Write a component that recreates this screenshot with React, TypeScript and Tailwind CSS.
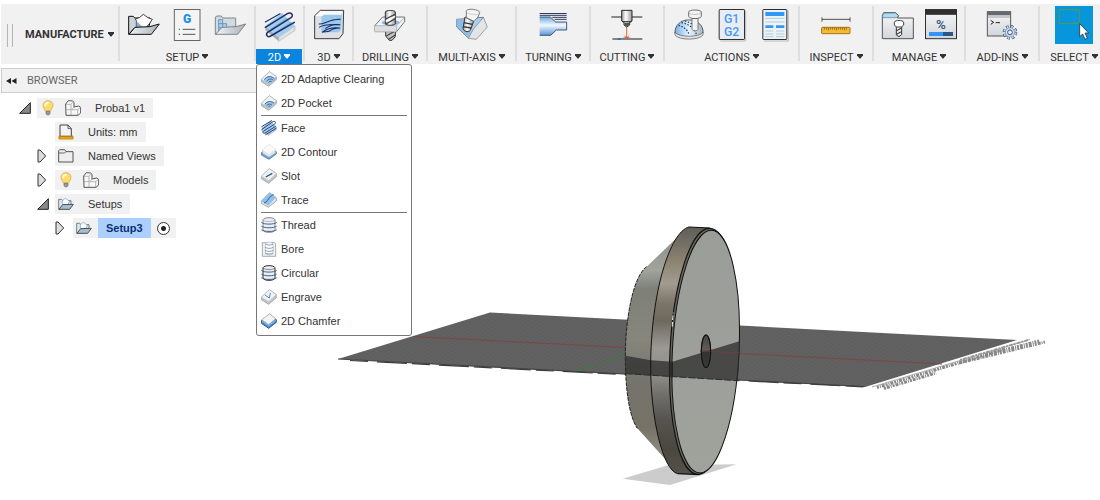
import type { ReactNode } from "react";

/* ---------- shared pieces ---------- */

function Ico({ x, label, children }: { x: number; label: string; children: ReactNode }) {
  return (
    <button type="button" aria-label={label} className="block size-[38px] shrink-0">
      <svg viewBox={`${x} 18 114 114`} className="block size-full" fill="none" aria-hidden="true">
        {children}
      </svg>
    </button>
  );
}

function Mini({ children }: { children: ReactNode }) {
  return (
    <svg viewBox="0 0 48 48" className="block size-4 shrink-0" fill="none" aria-hidden="true">
      {children}
    </svg>
  );
}

function Caret() {
  return (
    <svg viewBox="0 0 6 7" className="block h-[7px] w-1.5 shrink-0" fill="currentColor" aria-hidden="true">
      <path d="M0 0h6v1.200L3.500 4.400h-1L0 1.200z" />
    </svg>
  );
}

function Separator() {
  return <div className="mt-0.5 mb-[3px] w-0.5 shrink-0 bg-[#dedede]" />;
}

type GroupProps = { label: string; width: string; active?: boolean; children: ReactNode; menu?: ReactNode };

function Group({ label, width, active, children, menu }: GroupProps) {
  return (
    <div className={`relative flex shrink-0 flex-col justify-between pt-0.5 ${width}`}>
      <div className="flex justify-center gap-[5px]">{children}</div>
      <button
        type="button"
        className={`flex h-[15px] items-center justify-center gap-[3px] pt-0.5 text-[11px] leading-[13px] ${
          active ? "mr-px bg-[#0a84de] text-white" : "text-[#333]"
        }`}
      >
        {label}
        <Caret />
      </button>
      {menu}
    </div>
  );
}

/* ---------- toolbar drawings ---------- */

const SetupIcon = () => (
  <Ico x={378} label="New setup">
    <path d="M389 49h14l4 5h46v12l-3 14-43 3-18 20z" fill="#cdd2d8" stroke="#111" strokeWidth="3" />
    <path d="M412 82V62l-3-5 12-4 12-10 14 10 13 5-8 12-10 12z" fill="#fff" stroke="#222" strokeWidth="2.500" />
    <path d="M413 64v17h18z" fill="#7fb0de" />
    <path d="M408 82l44-2 29-8-24 31h-67z" fill="url(#lid)" stroke="#111" strokeWidth="3" />
  </Ico>
);

const NcIcon = () => (
  <Ico x={505} label="NC program">
    <rect x="524" y="28.500" width="77" height="93" fill="#f4f4f4" stroke="#666" strokeWidth="3" />
    <text x="562" y="69" textAnchor="middle" fontFamily="Roboto, sans-serif" fontSize="36" fontWeight="900" fill="#1b8fe6">
      G
    </text>
    <path d="M537 88h4M549 88h38M537 103h4M549 103h38" stroke="#555" strokeWidth="3" />
  </Ico>
);

const FolderIcon = () => (
  <Ico x={634} label="New folder">
    <path d="M647 51l5-3h13l4 6h39v24l-61 25z" fill="#d3d9df" stroke="#7c8790" strokeWidth="3" />
    <path
      d="M657 59h12v12h12v12h12v12h-36zM657 71h12M657 83h24M669 71v24M681 83v12"
      fill="#a9cfeb"
      stroke="#5b8db3"
      strokeWidth="2.500"
    />
    <path d="M667 82l42-2 29-8-24 31h-66z" fill="url(#lid)" stroke="#7c8790" strokeWidth="3" />
  </Ico>
);

const TwoDIcon = () => (
  <Ico x={33} label="2D">
    <path d="M46 78l40 33v13L46 91z" fill="#a9adb1" />
    <path d="M86 111l49-33v13l-49 33z" fill="#dfe2e4" stroke="#9ba1a7" strokeWidth="1.500" />
    <path d="M46 78l50-39 39 39-49 34z" fill="#a3cdf0" />
    <path d="M60 90l52-35M74 101l50-34" stroke="#82b0da" strokeWidth="5" />
    <path
      d="M46 82l66-41c12-6 20 5 11 12L54 96c-9 7-2 18 8 12l71-41"
      stroke="#1d2f66"
      strokeWidth="4.500"
      strokeLinecap="round"
    />
    <path d="M46 66l44-25" stroke="#1d2f66" strokeWidth="3.500" strokeLinecap="round" />
  </Ico>
);

const ThreeDIcon = () => (
  <Ico x={180} label="3D">
    <path d="M194 47l17-16h70l-2 70-12 15h-73z" fill="#dfe2e5" stroke="#3a3d40" strokeWidth="3" />
    <path d="M196 48l15-15h67l-6 14z" fill="#f8f9fa" />
    <path d="M214 50l8-6h54l-3 46-8 7h-51z" fill="#9cc7ec" />
    <path
      d="M206 72c18 2 32-17 66-14-20 1-30 3-43 9M207 82c12-8 28-10 64-8-20-3-35 4-45 12M216 97c15-12 28-15 54-13-17 0-24 3-31 9-8 3-17 1-23 4z"
      stroke="#192c62"
      strokeWidth="3.200"
    />
  </Ico>
);

const DrillIcon = () => (
  <Ico x={365} label="Drilling">
    <path d="M409 90h29v20l-10 11h-8l-11-13z" fill="#c4c4c4" stroke="#333" strokeWidth="3" />
    <path d="M411 108l26-15M418 118l20-13" stroke="#444" strokeWidth="3.500" />
    <path d="M377 76l23-25h66v14l-24 30h-65z" fill="#f1f2f4" stroke="#555a60" strokeWidth="2.500" />
    <path d="M377 78h65v17h-65z" fill="#dcdfe2" />
    <path d="M377 77h65l24-25M442 77v18" stroke="#9ba0a6" strokeWidth="2" />
    <ellipse cx="424" cy="68" rx="27" ry="8" fill="#8bbbe8" />
    <path d="M408 36c0-6 30-6 30 0v36c-5 5-26 5-30 0z" fill="url(#metal)" stroke="#333" strokeWidth="3" />
    <path d="M409 57l28-14M410 72l28-16" stroke="#444" strokeWidth="4" />
    <path d="M409 64l28-15" stroke="#fff" strokeWidth="4" />
  </Ico>
);

const MultiIcon = () => (
  <Ico x={610} label="Multi-axis">
    <path d="M621 58l80-6-31 52-14 10-35-33z" fill="#a9d1f2" stroke="#5a7088" strokeWidth="2.500" />
    <path d="M701 52l12 29-33 37-24-3 14-26z" fill="#e2e5e8" stroke="#777" strokeWidth="2" />
    <path d="M621 58h19l22 41-5 14-36-34z" fill="#8dbbe4" />
    <path d="M646 51l26 13-10 27c-8 8-21 2-22-6z" fill="url(#metal)" stroke="#333" strokeWidth="3" />
    <path d="M643 68l25 5M640 80l24 4" stroke="#333" strokeWidth="4" />
    <path d="M650 32c4-8 42-4 40 7l-5 12-12 13-23-11z" fill="#f4f4f4" stroke="#666" strokeWidth="2.500" />
    <path d="M650 37c9 7 29 9 39 4" stroke="#bbb" strokeWidth="2" />
  </Ico>
);

const TurningIcon = () => (
  <Ico x={103} label="Turning">
    <path d="M120 51h32l16 15h33v24h-31l-17 16h-33z" fill="url(#blueV)" />
    <path d="M120 51h32l16 15h33v24h-31l-17 16h-33" stroke="#26425f" strokeWidth="2.500" />
    <path d="M120 40.500h81M120 46h81M158 52h43M165 58h36" stroke="#0e2149" strokeWidth="2.600" />
  </Ico>
);

const CuttingIcon = () => (
  <Ico x={326} label="Cutting">
    <path d="M336 51h93" stroke="#222" strokeWidth="3" />
    <path d="M367 31h31v32l-7 4v8l-9 6-8-6v-8l-7-4z" fill="url(#metal)" stroke="#2b2b2b" strokeWidth="3" />
    <path d="M369 65h28" stroke="#2b2b2b" strokeWidth="3" />
    <path d="M375 68h15v7l-8 5-7-5z" fill="#555" />
    <path d="M382 81v31M375 107l7 7 7-7M382 112l-12 3M382 112l12 3" stroke="#e14b18" strokeWidth="2.500" />
    <path d="M339 117h90" stroke="#858585" strokeWidth="6" />
    <path d="M356 117h8" stroke="#1a78c8" strokeWidth="6" />
  </Ico>
);

const SimulateIcon = () => (
  <Ico x={509} label="Simulate">
    <path d="M524 100c-2-22 17-42 42-40 26-1 44 18 42 38-8 22-76 22-84 2z" fill="url(#blueH)" stroke="#444" strokeWidth="2.500" />
    <path d="M524 96c9 17 76 17 84 0v9c-11 16-72 17-84 0z" fill="#e0e2e4" stroke="#555" strokeWidth="2" />
    <path
      d="M535 76c13 4 26 11 31 27M544 68c20 4 35 14 44 34M554 63c14 4 27 10 36 23"
      stroke="#142c5c"
      strokeWidth="3.500"
      strokeDasharray="4 5"
    />
    <path d="M575 55v33c2 6 16 6 18 0V55z" fill="#f3f3f3" stroke="#666" strokeWidth="2.500" />
    <path d="M565 36c0-8 37-8 38 0v13c-2 9-36 9-38 0z" fill="#f3f3f3" stroke="#555" strokeWidth="2.500" />
    <path d="M565 38c6 7 32 7 38 0" stroke="#aaa" strokeWidth="2" />
  </Ico>
);

const PostIcon = () => (
  <Ico x={640} label="Post process">
    <path d="M662 123h76V32" stroke="#bbb" strokeWidth="3" />
    <rect x="658.500" y="28.500" width="76" height="90" rx="2" fill="#e9edf1" stroke="#2c2f33" strokeWidth="3" />
    <text x="696" y="69" textAnchor="middle" fontFamily="Roboto, sans-serif" fontSize="37" fontWeight="500" fill="#459bf5">
      G1
    </text>
    <text x="696" y="108" textAnchor="middle" fontFamily="Roboto, sans-serif" fontSize="37" fontWeight="500" fill="#459bf5">
      G2
    </text>
  </Ico>
);

const SheetIcon = () => (
  <Ico x={770} label="Setup sheet">
    <path d="M794 123h73V32" stroke="#bbb" strokeWidth="3" />
    <rect x="790.500" y="28.500" width="72" height="90" rx="2" fill="#eef2f5" stroke="#2c2f33" strokeWidth="3" />
    <path d="M798 42h57" stroke="#3398f5" strokeWidth="12" />
    <path d="M798 80h24M830 80h25" stroke="#3398f5" strokeWidth="8" />
    <path
      d="M798 55h57M798 66h57M798 93h24M830 93h25M798 102h24M830 102h25M798 110h24M830 110h25"
      stroke="#abd0e0"
      strokeWidth="3"
    />
  </Ico>
);

const InspectIcon = () => (
  <Ico x={80} label="Measure">
    <path d="M95 58h84M95 52v13M179 52v13" stroke="#333" strokeWidth="2.500" />
    <rect x="94" y="82" width="85" height="19" rx="2" fill="#f3bb35" stroke="#a87412" strokeWidth="3" />
    <path
      d="M102 83v6M108 83v6M114 83v8M120 83v6M126 83v6M132 83v6M138 83v8M144 83v6M150 83v6M156 83v6M162 83v8M168 83v6"
      stroke="#704c08"
      strokeWidth="2"
    />
  </Ico>
);

const ToolLibIcon = () => (
  <Ico x={267} label="Tool library">
    <path d="M277 46l4-8h36l9 9-4 7h48v62h-93z" fill="url(#sheen)" stroke="#555" strokeWidth="3" />
    <path d="M278 46l4-7h35l8 8-5 6h-42z" fill="#b4d9ee" stroke="#3c7fa8" strokeWidth="2" />
    <path d="M319 78h16v26l-8 6-8-5z" fill="#eee" stroke="#333" strokeWidth="3" />
    <path d="M320 92l14-8M320 103l14-8" stroke="#444" strokeWidth="3.500" />
    <path d="M313 66c3-6 25-6 28 0v9l-7 6h-15l-6-6z" fill="#fff" stroke="#444" strokeWidth="3" />
  </Ico>
);

const TaskIcon = () => (
  <Ico x={396} label="Task manager">
    <rect x="406.500" y="29" width="93" height="87" fill="url(#sheen)" stroke="#303030" strokeWidth="3" />
    <path d="M405 36h96" stroke="#303030" strokeWidth="17" />
    <text x="453" y="86" textAnchor="middle" fontFamily="Roboto, sans-serif" fontSize="40" fontWeight="500" fill="#2d527c">
      %
    </text>
    <path d="M417 102h42" stroke="#3494f5" strokeWidth="12" />
    <path d="M459 102h30" stroke="#2a5788" strokeWidth="12" />
  </Ico>
);

const AddInIcon = () => (
  <Ico x={579} label="Scripts and add-ins">
    <rect x="592" y="35" width="70" height="73" fill="url(#sheen)" stroke="#555" strokeWidth="3" />
    <path d="M592 41h70" stroke="#646a70" strokeWidth="10" />
    <path d="M594 51h67" stroke="#777" strokeWidth="2" />
    <path d="M602 61l9 6-9 6M617 68h13" stroke="#222" strokeWidth="3" />
    <circle cx="660" cy="97" r="18" stroke="#3d5878" strokeWidth="8" strokeDasharray="8 6.140" />
    <circle cx="660" cy="97" r="17" stroke="#c9dbef" strokeWidth="6" strokeDasharray="5 8.350" strokeDashoffset="-1.500" />
    <circle cx="660" cy="97" r="14" fill="#c9dbef" stroke="#5b7a9e" strokeWidth="1.500" />
    <circle cx="660" cy="97" r="7" fill="#f2f2f2" stroke="#3d5878" strokeWidth="3" />
  </Ico>
);

const SelectIcon = () => (
  <Ico x={795} label="Select">
    <path d="M795 18h114v114H795z" fill="#0796db" />
    <path d="M808 29h61v42h-61z" stroke="#5d9b3e" strokeWidth="3" />
    <path d="M869 71v39l9-8 7 16 7-3-7-16h11z" fill="#fff" stroke="#333" strokeWidth="2.500" />
  </Ico>
);

const SharedGradients = () => (
  <svg className="absolute size-0" aria-hidden="true">
    <defs>
      <linearGradient id="lid">
        <stop offset="0" stopColor="#f1f3f5" />
        <stop offset="1" stopColor="#a9b1b9" />
      </linearGradient>
      <linearGradient id="sheen" x1="0" y1="0" x2="0" y2="1">
        <stop offset="0" stopColor="#f6f7f8" />
        <stop offset="1" stopColor="#d2d6db" />
      </linearGradient>
      <linearGradient id="metal">
        <stop offset="0" stopColor="#999" />
        <stop offset=".4" stopColor="#fff" />
        <stop offset="1" stopColor="#999" />
      </linearGradient>
      <linearGradient id="blueV" x1="0" y1="0" x2="0" y2="1">
        <stop offset="0" stopColor="#6ea8de" />
        <stop offset=".45" stopColor="#f1f8ff" />
        <stop offset="1" stopColor="#5795d4" />
      </linearGradient>
      <linearGradient id="blueH">
        <stop offset="0" stopColor="#78b2e8" />
        <stop offset=".5" stopColor="#e6f3ff" />
        <stop offset="1" stopColor="#a3b6c8" />
      </linearGradient>
    </defs>
  </svg>
);

/* ---------- 2D menu ---------- */

const Slab = () => (
  <>
    <path d="M1 25L25 2l21 15v9L23 46 1 32z" fill="#c3c6c9" stroke="#8d9195" strokeWidth="2" />
    <path d="M1 25L25 2l21 15-23 21z" fill="#f1f2f3" stroke="#a9adb1" strokeWidth="1.500" />
  </>
);

const Coils = ({ edge }: { edge: string }) => (
  <>
    <path d="M6 8c4-8 32-8 36 0v32c-4 8-32 8-36 0z" fill="#eceef0" stroke={edge} strokeWidth="3" />
    <path d="M6 9c5 6 31 6 36 0" stroke={edge} strokeWidth="1.500" />
    <path
      d="M2 17c8 6 36 6 44 0M2 28c8 6 36 6 44 0M2 39c8 6 36 6 44 0"
      stroke="#3d6492"
      strokeWidth="3"
      strokeLinecap="round"
    />
  </>
);

const menuSections: { name: string; icon: ReactNode }[][] = [
  [
    {
      name: "2D Adaptive Clearing",
      icon: (
        <>
          <Slab />
          <path d="M8 28c6-14 24-16 34-4L24 38z" fill="#9ac5ea" />
          <path d="M10 26c8-12 22-12 31-2M17 31c5-8 14-9 20-3M23 35c2-5 6-5 9-3" stroke="#2c5c93" strokeWidth="2.600" />
        </>
      ),
    },
    {
      name: "2D Pocket",
      icon: (
        <>
          <Slab />
          <path d="M9 29c6-12 24-14 32-4L24 38z" fill="#9ac5ea" />
          <path d="M12 27c6-9 20-10 27-2M17 32c4-6 12-6 16-1M22 36c2-3 4-3 6-1" stroke="#2c5c93" strokeWidth="2.600" />
        </>
      ),
    },
  ],
  [
    {
      name: "Face",
      icon: (
        <>
          <path d="M3 25L28 4l18 17v8L22 46 3 33z" fill="#a5ccef" stroke="#8c9bab" strokeWidth="1.500" />
          <path
            d="M2 20L32 2M3 28L36 5c8-3 10 4 4 8L8 33c-5 4-1 9 4 6l32-20M14 44l31-19"
            stroke="#2a4676"
            strokeWidth="3"
            strokeLinecap="round"
          />
        </>
      ),
    },
    {
      name: "2D Contour",
      icon: (
        <>
          <path d="M1 26l23-12 22 9v7L24 46 1 33z" fill="#6fa6dc" stroke="#2f5f95" strokeWidth="2" />
          <path d="M5 17L25 2l18 13v12L24 39 5 28z" fill="#e4e6e8" stroke="#b6b9bc" strokeWidth="1.500" />
          <path d="M5 17L25 2l18 13-19 15z" fill="#fafafa" />
        </>
      ),
    },
    {
      name: "Slot",
      icon: (
        <>
          <Slab />
          <path d="M14 27l20-11" stroke="#285b9a" strokeWidth="4" />
        </>
      ),
    },
    {
      name: "Trace",
      icon: (
        <>
          <path d="M1 27L26 2l20 15v10L22 46 1 34z" fill="#e0e3e6" stroke="#85898d" strokeWidth="2" />
          <path d="M1 27L26 2l18 14-22 25z" fill="#8fbfea" />
          <path d="M9 33c10-2 12-12 17-17s9-6 12-10" stroke="#285b9a" strokeWidth="3" />
        </>
      ),
    },
  ],
  [
    { name: "Thread", icon: <Coils edge="#888" /> },
    {
      name: "Bore",
      icon: (
        <>
          <path d="M4 5h37l3 3v38H4z" fill="#eff0f2" stroke="#9a9ea3" strokeWidth="2.500" />
          <path d="M13 9c3-7 20-7 23 0v28c-4 6-19 6-23 0z" fill="#fff" stroke="#9aa6b6" strokeWidth="1.500" />
          <path
            d="M13 9c5 4 18 4 23 0M12 19c5 4 20 4 25 0M12 28c5 4 20 4 25 0M13 36c5 4 18 4 23 0"
            stroke="#5f7ca6"
            strokeWidth="2.200"
          />
        </>
      ),
    },
    { name: "Circular", icon: <Coils edge="#2a2a2a" /> },
    {
      name: "Engrave",
      icon: (
        <>
          <Slab />
          <path d="M12 18l13 9 3-15" stroke="#4b8bcf" strokeWidth="3" />
        </>
      ),
    },
    {
      name: "2D Chamfer",
      icon: (
        <>
          <path d="M1 23L26 4l20 16v8L23 46 1 31z" fill="#4a8dd2" stroke="#254366" strokeWidth="2.500" />
          <path d="M2 20L26 2l18 15-21 18z" fill="#f3f4f6" stroke="#8d9196" strokeWidth="1.500" />
          <path d="M3 24l20 14 21-16" stroke="#8fc0ee" strokeWidth="3" />
        </>
      ),
    },
  ],
];

function TwoDMenu() {
  return (
    <div
      role="menu"
      className="absolute top-full left-0 z-10 flex w-[156px] flex-col rounded-[3px] border border-[#777] bg-white px-1 py-0.5 font-['Liberation_Sans',sans-serif]"
    >
      {menuSections.map((items, i) => (
        <div key={i} className={i > 0 ? "border-t border-[#777]" : ""}>
          {items.map((it) => (
            <button
              key={it.name}
              type="button"
              role="menuitem"
              className="flex h-6 w-full items-center gap-1 text-left text-[11px] whitespace-nowrap text-[#333]"
            >
              <Mini>{it.icon}</Mini>
              {it.name}
            </button>
          ))}
        </div>
      ))}
    </div>
  );
}

/* ---------- browser tree ---------- */

const Bulb = () => (
  <Mini>
    <path d="M24 2c10 0 15 7 15 14 0 7-5 10-7 17H16C14 26 9 23 9 16 9 9 14 2 24 2z" fill="#fddc6b" stroke="#c9a136" strokeWidth="2" />
    <path d="M16 16c0-5 4-8 8-8" stroke="#fffbe0" strokeWidth="6" strokeLinecap="round" />
    <path d="M18 34h12v7l-4 4h-4l-4-4z" fill="#999" stroke="#666" strokeWidth="2" />
  </Mini>
);

const Cubes = () => (
  <Mini>
    <path
      d="M2 12L10 2l13 1 4 4v14l14-3 6 4v17l-8 7H3z"
      fill="#f7f7f8"
      stroke="#555"
      strokeWidth="3"
      strokeLinejoin="round"
    />
    <path d="M3 13h14l8-7M18 13v32M3 29h15M20 29l7-8M20 29h18l8-7M38 29v16" stroke="#999" strokeWidth="2" />
  </Mini>
);

const UnitsIcon = () => (
  <Mini>
    <path d="M6 3h24l10 11v26H6z" fill="#f1f3f5" stroke="#444" strokeWidth="3" />
    <path d="M30 3v11h10" stroke="#444" strokeWidth="2.500" />
    <path d="M3 36h42v9H3z" fill="#f3b01f" stroke="#b57b06" strokeWidth="2.500" />
    <path d="M9 36v4M15 36v4M21 36v4M27 36v4M33 36v4M39 36v4" stroke="#704c08" strokeWidth="2" />
  </Mini>
);

const ViewsIcon = () => (
  <Mini>
    <path d="M2 8l3-3h15l4 6h21v31H2z" fill="#eceff2" stroke="#555" strokeWidth="3" />
    <path d="M3 15h17l4-4" stroke="#555" strokeWidth="2.500" />
  </Mini>
);

const SetupsIcon = () => (
  <Mini>
    <path d="M2 10h9l4 4h24v12L2 40z" fill="#e1e6eb" stroke="#777f87" strokeWidth="3" />
    <path d="M13 25V14l9-7 12 8-4 12z" fill="#fff" stroke="#6b9cc9" strokeWidth="2" />
    <path d="M14 26l32-1-11 15H3z" fill="#a7bccd" stroke="#3f5261" strokeWidth="3" />
  </Mini>
);

const Expanded = () => (
  <svg viewBox="0 0 36 36" className="block size-3" aria-hidden="true">
    <path d="M34 2v32H2z" fill="#888" stroke="#222" strokeWidth="3" />
  </svg>
);

const Collapsed = () => (
  <svg viewBox="0 0 30 42" className="block h-3.5 w-2.5" aria-hidden="true">
    <path d="M3 3h6l17 18L9 39H3z" fill="#ddd" stroke="#333" strokeWidth="3" />
  </svg>
);

type RowProps = {
  name: string;
  pad: string;
  state?: "open" | "closed";
  icons: ReactNode[];
  selected?: boolean;
};

function Row({ name, pad, state, icons, selected }: RowProps) {
  return (
    <li className={`flex h-5 items-center ${pad}`}>
      <span className="flex w-[18px] shrink-0 items-center">
        {state && (
          <button type="button" aria-label={`Toggle ${name}`}>
            {state === "open" ? <Expanded /> : <Collapsed />}
          </button>
        )}
      </span>
      <span className="flex h-full items-center bg-[#f1f1f1]">
        {icons.map((icon, i) => (
          <span key={i} className="flex w-[25px] items-center pl-[3px]">
            {icon}
          </span>
        ))}
        <label
          htmlFor={selected ? "active-setup" : undefined}
          className={`flex h-full items-center px-2 pt-px whitespace-nowrap ${selected ? "bg-[#abd0ff] font-bold text-[#0d2f73]" : ""}`}
        >
          {name}
        </label>
        {selected && (
          <input
            id="active-setup"
            type="radio"
            defaultChecked
            className="mx-1.5 size-[13px] appearance-none rounded-full border border-[#333] bg-[radial-gradient(circle,#222_2px,#fff_3px)]"
          />
        )}
      </span>
    </li>
  );
}

function Browser() {
  return (
    <aside className="z-[1] flex w-80 flex-col gap-[5px] justify-self-start pt-1 pl-px font-['Liberation_Sans',sans-serif] text-[11px] text-[#333] [grid-area:1/1]">
      <header className="flex h-[25px] items-center gap-2.5 border border-[#ccc] bg-[#f1f1f1] pl-1 font-['Roboto',sans-serif] text-[#666]">
        <button type="button" aria-label="Collapse browser">
          <svg viewBox="0 0 11 6" className="block h-1.5 w-[11px]" fill="#222" aria-hidden="true">
            <path d="M5 0v6L0 3zM10.500 0v6l-5-3z" />
          </svg>
        </button>
        <span className="pt-px">BROWSER</span>
      </header>
      <ul className="flex flex-col gap-1">
        <Row name="Proba1 v1" pad="pl-[18px]" state="open" icons={[<Bulb />, <Cubes />]} />
        <Row name="Units: mm" pad="pl-9" icons={[<UnitsIcon />]} />
        <Row name="Named Views" pad="pl-9" state="closed" icons={[<ViewsIcon />]} />
        <Row name="Models" pad="pl-9" state="closed" icons={[<Bulb />, <Cubes />]} />
        <Row name="Setups" pad="pl-9" state="open" icons={[<SetupsIcon />]} />
        <Row name="Setup3" pad="pl-[54px]" state="closed" icons={[<SetupsIcon />]} selected />
      </ul>
    </aside>
  );
}

/* ---------- 3D scene ---------- */

const tilt = (cx: number, cy: number) => `matrix(1 0 -.0466 1 ${cx} ${cy})`;

function Scene() {
  return (
    <svg viewBox="0 64 1100 436" className="block h-auto w-full [grid-area:1/1]" fill="none" role="img" aria-label="Model view">
      <defs>
        <pattern id="mesh" width="6" height="4" patternUnits="userSpaceOnUse" patternTransform="rotate(3)">
          <rect width="6" height="4" fill="#5f5f5f" />
          <path d="M0 1h3M3 3h3" stroke="#656565" strokeWidth="1" />
        </pattern>
        <linearGradient id="rim" gradientUnits="userSpaceOnUse" x1="0" y1="50" x2="0" y2="792">
          <stop offset="0" stopColor="#5f5d57" />
          <stop offset=".06" stopColor="#716d63" />
          <stop offset=".14" stopColor="#8c8471" />
          <stop offset=".23" stopColor="#a29c90" />
          <stop offset=".31" stopColor="#7b7568" />
          <stop offset=".38" stopColor="#6e695d" />
          <stop offset=".49" stopColor="#9b9994" />
          <stop offset=".6" stopColor="#8f8d86" />
          <stop offset=".68" stopColor="#706f6a" />
          <stop offset=".78" stopColor="#555450" />
          <stop offset=".9" stopColor="#4c473f" />
          <stop offset="1" stopColor="#55514a" />
        </linearGradient>
        <linearGradient id="cone" gradientUnits="userSpaceOnUse" x1="120" y1="90" x2="150" y2="750">
          <stop offset="0" stopColor="#8e9189" />
          <stop offset=".14" stopColor="#a1a49d" />
          <stop offset=".22" stopColor="#7e8079" />
          <stop offset=".45" stopColor="#86867c" />
          <stop offset=".65" stopColor="#74736c" />
          <stop offset=".85" stopColor="#777267" />
          <stop offset="1" stopColor="#918f87" />
        </linearGradient>
        <linearGradient id="bore" x1="0" y1="0" x2="0" y2="1">
          <stop offset="0" stopColor="#4f4c46" />
          <stop offset=".45" stopColor="#77736a" />
          <stop offset=".55" stopColor="#353535" />
          <stop offset="1" stopColor="#555" />
        </linearGradient>
        <linearGradient id="face" x1="0" y1="0" x2="0" y2="1">
          <stop offset="0" stopColor="#9a9e98" />
          <stop offset="1" stopColor="#a0a29c" />
        </linearGradient>
      </defs>

      <path d="M338 359l152-46.500L1017 340l-152 47z" fill="url(#mesh)" />
      <path d="M338 359L865 386.500" stroke="#474747" strokeWidth="1.200" />
      <path d="M350 360.500L865 387" stroke="#3c3c3c" strokeWidth="1.200" strokeDasharray="18 9 30 5" />
      <path d="M413 336.500L942 364" stroke="#7c4747" strokeWidth="1" />
      <path d="M575 371l51-16" stroke="#3f7a3f" strokeWidth="1" />
      <path d="M872 387l158-47.500" stroke="#aaa" strokeWidth="1" />
      <path d="M877 387.500l128-38.500" stroke="#888" strokeWidth="3" strokeDasharray="2 1 1 1 3 1" />
      <path d="M884 388.500L936 373" stroke="#888" strokeWidth="3" strokeDasharray="2 1 3 1 1 1" />
      <path d="M959 363l86-21M985 355l54-14" stroke="#888" strokeWidth="3" strokeDasharray="3 1 1 1 2 1" />
      <path d="M960 360l68-20" stroke="#999" strokeWidth="2" strokeDasharray="2 1 4 1" />

      <g transform="translate(600 210) scale(.33333)">
        <path d="M68 806l136-40 206-3-200 62z" fill="#ccc" />
        <path d="M232 82L140 170C98 200 76 330 76 440c0 100 12 180 36 215l92 102h40z" fill="url(#cone)" />
        <path d="M140 170C98 200 76 330 76 440c0 100 12 180 36 215" stroke="#222" strokeWidth="3" strokeDasharray="12 3" />
        <path d="M267 51C210 65 152 250 152 470c0 150 35 310 81 321l66 3L330 53z" fill="url(#rim)" />
        <path d="M267 51C210 65 152 250 152 470c0 150 35 310 81 321" stroke="#111" strokeWidth="3" />
        <path d="M267 51l62 3M233 791l65 3" stroke="#111" strokeWidth="3.500" />
        <ellipse rx="101" ry="369" transform={tilt(311, 424)} fill="#696860" stroke="#111" strokeWidth="3.500" />
        <ellipse rx="100" ry="364" transform={tilt(317, 425)} fill="url(#face)" stroke="#111" strokeWidth="3" />
        <ellipse rx="14" ry="49" transform="translate(318 424)" fill="url(#bore)" stroke="#111" strokeWidth="3.500" />
        <path d="M76 437l76 14 65 4 201-61c1 40-1 80-5 118L76 491z" fill="#2d2d2d" fillOpacity=".76" />
        <path d="M152 451v46M210 455v47M217 455v47" stroke="#1d1d1d" strokeWidth="3" />
        <path d="M76 491l337 21" stroke="#2b2b2b" strokeWidth="3" strokeDasharray="22 5" />
        <path d="M300 423l118 6" stroke="#7a3a3a" strokeWidth="2.500" />
        <ellipse rx="14" ry="49" transform="translate(318 424)" fill="#3d3b38" fillOpacity=".4" stroke="#111" strokeWidth="3" />
        <path d="M217 350c0-15 1-27 3-42" stroke="#eee" strokeWidth="3" strokeDasharray="14 6" />
      </g>
    </svg>
  );
}

/* ---------- page ---------- */

export default function App() {
  return (
    <div className="overflow-x-clip bg-white font-['Roboto',sans-serif]">
      <SharedGradients />
      <nav className="relative z-20 mt-1 ml-px flex h-[60px] bg-[#f1f1f1]">
        <div className="flex w-[117px] shrink-0 items-center gap-3 pt-0.5 pl-1.5">
          <span className="h-[23px] w-1.5 shrink-0 border-x border-[#b5b5b5]" />
          <button type="button" className="flex items-center gap-1 text-[11px] font-bold text-[#333]">
            MANUFACTURE
            <Caret />
          </button>
        </div>
        <Separator />
        <Group label="SETUP" width="w-[134px]">
          <SetupIcon />
          <NcIcon />
          <FolderIcon />
        </Group>
        <Separator />
        <Group label="2D" width="w-[47px]" active menu={<TwoDMenu />}>
          <TwoDIcon />
        </Group>
        <Separator />
        <Group label="3D" width="w-[47px]">
          <ThreeDIcon />
        </Group>
        <Separator />
        <Group label="DRILLING" width="w-[72px]">
          <DrillIcon />
        </Group>
        <Separator />
        <Group label="MULTI-AXIS" width="w-[87px]">
          <MultiIcon />
        </Group>
        <Separator />
        <Group label="TURNING" width="w-[72px]">
          <TurningIcon />
        </Group>
        <Separator />
        <Group label="CUTTING" width="w-[72px]">
          <CuttingIcon />
        </Group>
        <Separator />
        <Group label="ACTIONS" width="w-[133px]">
          <SimulateIcon />
          <PostIcon />
          <SheetIcon />
        </Group>
        <Separator />
        <Group label="INSPECT" width="w-[72px]">
          <InspectIcon />
        </Group>
        <Separator />
        <Group label="MANAGE" width="w-[90px]">
          <ToolLibIcon />
          <TaskIcon />
        </Group>
        <Separator />
        <Group label="ADD-INS" width="w-[72px]">
          <AddInIcon />
        </Group>
        <Separator />
        <Group label="SELECT" width="w-[60px] pl-2">
          <SelectIcon />
        </Group>
      </nav>
      <main className="grid">
        <Browser />
        <Scene />
      </main>
    </div>
  );
}
